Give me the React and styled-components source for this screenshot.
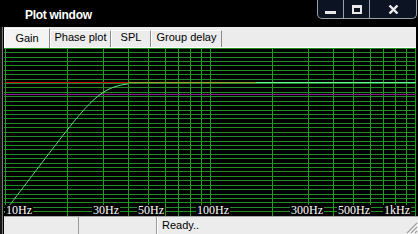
import styled, { createGlobalStyle } from "styled-components";

const GlobalStyle = createGlobalStyle`
  html, body { margin: 0; padding: 0; background: #000; overflow: hidden; }
  body { font-family: "Liberation Sans", Arial, sans-serif; }
`;

const Window = styled.div`
  width: 418px;
  height: 234px;
  display: flex;
  flex-direction: column;
  background: #000;
`;

const TitleBar = styled.div`
  height: 27px;
  flex: none;
  display: flex;
  align-items: flex-start;
  justify-content: space-between;
`;

const Title = styled.span`
  margin: 8px 0 0 25px;
  color: #fff;
  font: bold 12px/14px "Liberation Sans", Arial, sans-serif;
  letter-spacing: -0.3px;
`;

const Controls = styled.div`
  display: flex;
  height: 18px;
  margin: 0 1px 0 0;
  border: 1px solid #9ba1a8;
  border-top: none;
  border-radius: 0 0 5px 5px;
  background: #0c1322;
  overflow: hidden;
`;

const CtrlButton = styled.div`
  width: ${p => p.$w}px;
  display: flex;
  align-items: center;
  justify-content: center;
  & + & { border-left: 1px solid #9ba1a8; }
`;

const MinBar = styled.div`
  width: 11px;
  height: 3px;
  margin-top: 6px;
  background: #e8e8e8;
`;

const MaxBox = styled.div`
  width: 6px;
  height: 4px;
  border: 2px solid #e8e8e8;
  border-top-width: 3px;
`;

const Frame = styled.div`
  flex: 1;
  display: flex;
  flex-direction: column;
  padding: 0 2px 0 4px;
  background: linear-gradient(to right, #161616 0 2px, #7b7b7b 2px 3px, #000 3px);
`;

const TabBar = styled.div`
  height: 21px;
  flex: none;
  display: flex;
  align-items: flex-end;
  background: #ececec;
  box-shadow: inset 0 -1px 0 #fdfdfd;
`;

const Tab = styled.div`
  box-sizing: border-box;
  width: ${p => p.$w}px;
  height: ${p => (p.$active ? 20 : 17)}px;
  margin-bottom: ${p => (p.$active ? 0 : 1)}px;
  display: flex;
  align-items: flex-end;
  justify-content: center;
  padding-bottom: 3px;
  background: ${p => (p.$active ? "#f4f4f4" : "#ececec")};
  border-top: 1px solid #fdfdfd;
  border-left: 1px solid #fdfdfd;
  border-right: 1px solid #8a8a8a;
  font: 11px/13px "Liberation Sans", Arial, sans-serif;
  color: #000;
`;

const Plot = styled.div`
  height: 168px;
  flex: none;
  background: #000;
  svg { display: block; }
`;

const StatusBar = styled.div`
  flex: 1;
  display: flex;
  margin-right: -2px;
  background: #ececec;
  border-top: 1px solid #a8a8a8;
`;

const Panel = styled.div`
  width: ${p => (p.$w ? `${p.$w}px` : "auto")};
  flex: ${p => (p.$w ? "none" : "1")};
  display: flex;
  align-items: center;
  justify-content: space-between;
  padding-left: ${p => (p.$w ? 0 : 4)}px;
  border-right: ${p => (p.$w ? "1px solid #9a9a9a" : "none")};
  border-left: ${p => (p.$w ? "none" : "1px solid #ffffff")};
  font: 11px/13px "Liberation Sans", Arial, sans-serif;
  color: #000;
`;

const Grip = styled.svg`
  align-self: flex-end;
`;

const FREQS = [10, 20, 30, 40, 50, 60, 70, 80, 90, 100, 200, 300, 400, 500, 600, 700, 800, 900, 1000];
const LABELS = [
  { t: "10Hz", x: 2, w: 26 },
  { t: "30Hz", x: 89, w: 26 },
  { t: "50Hz", x: 134, w: 26 },
  { t: "100Hz", x: 193, w: 32 },
  { t: "300Hz", x: 287, w: 32 },
  { t: "500Hz", x: 334, w: 32 },
  { t: "1kHz", x: 380, w: 26 },
];
const TABS = [
  { t: "Gain", w: 46, active: true },
  { t: "Phase plot", w: 61 },
  { t: "SPL", w: 40 },
  { t: "Group delay", w: 71 },
];

const xOf = f => 1 + 205 * Math.log10(f / 10);

function GainPlot() {
  const rows = [];
  for (let k = 0; k <= 38; k++) rows.push(Math.round(-0.3 + 4.42 * k));
  const pts = [];
  for (let x = -1; x <= 124; x++) {
    const f = 10 * Math.pow(10, (x - 1) / 205);
    const y = 34.5 + 33.75 * Math.log10(1 + Math.pow(30 / f, 8));
    pts.push(`${x},${y.toFixed(2)}`);
  }
  return (
    <svg width="412" height="168" viewBox="0 0 412 168">
      {rows.map(y => (
        <rect key={y} x="0" y={y} width="412" height="1" fill="#218c21" />
      ))}
      {FREQS.map(f => {
        const x = Math.min(Math.round(xOf(f)), 411);
        return <rect key={f} x={x} y="0" width="1" height="168" fill="#1e9e1e" />;
      })}
      <rect x="0" y="46" width="412" height="1" fill="#8a1a8a" />
      <rect x="1" y="34" width="123" height="1" fill="#c00c0c" />
      <rect x="124" y="34" width="128" height="1" fill="#a29a34" />
      <rect x="252" y="34" width="160" height="1" fill="#66ee96" />
      <polyline points={pts.join(" ")} fill="none" stroke="#5ee07e" strokeWidth="1" />
      {LABELS.map(l => (
        <g key={l.t}>
          <rect x={l.x - 1} y="157" width={l.w + 2} height="11" fill="#000" />
          <text x={l.x} y="165.5" fill="#fff" fontFamily="'Liberation Serif', 'Times New Roman', serif" fontSize="12">
            {l.t}
          </text>
        </g>
      ))}
    </svg>
  );
}

export default function App() {
  return (
    <Window>
      <GlobalStyle />
      <TitleBar>
        <Title>Plot window</Title>
        <Controls>
          <CtrlButton $w={25}><MinBar /></CtrlButton>
          <CtrlButton $w={25}><MaxBox /></CtrlButton>
          <CtrlButton $w={46}>
            <svg width="11" height="9" viewBox="0 0 11 9">
              <path d="M1.5 0.5 L9.5 8.5 M9.5 0.5 L1.5 8.5" stroke="#ececec" strokeWidth="2.4" />
            </svg>
          </CtrlButton>
        </Controls>
      </TitleBar>
      <Frame>
        <TabBar>
          {TABS.map(t => (
            <Tab key={t.t} $w={t.w} $active={t.active}>{t.t}</Tab>
          ))}
        </TabBar>
        <Plot>
          <GainPlot />
        </Plot>
        <StatusBar>
          <Panel $w={74} />
          <Panel $w={77} />
          <Panel>
            <span>Ready..</span>
            <Grip width="14" height="14" viewBox="0 0 14 14">
              <path d="M13 3 L3 13 M13 7 L7 13 M13 11 L11 13" stroke="#a0a0a0" strokeWidth="1.2" />
              <path d="M14 4 L4 14 M14 8 L8 14 M14 12 L12 14" stroke="#fff" strokeWidth="1" />
            </Grip>
          </Panel>
        </StatusBar>
      </Frame>
    </Window>
  );
}
